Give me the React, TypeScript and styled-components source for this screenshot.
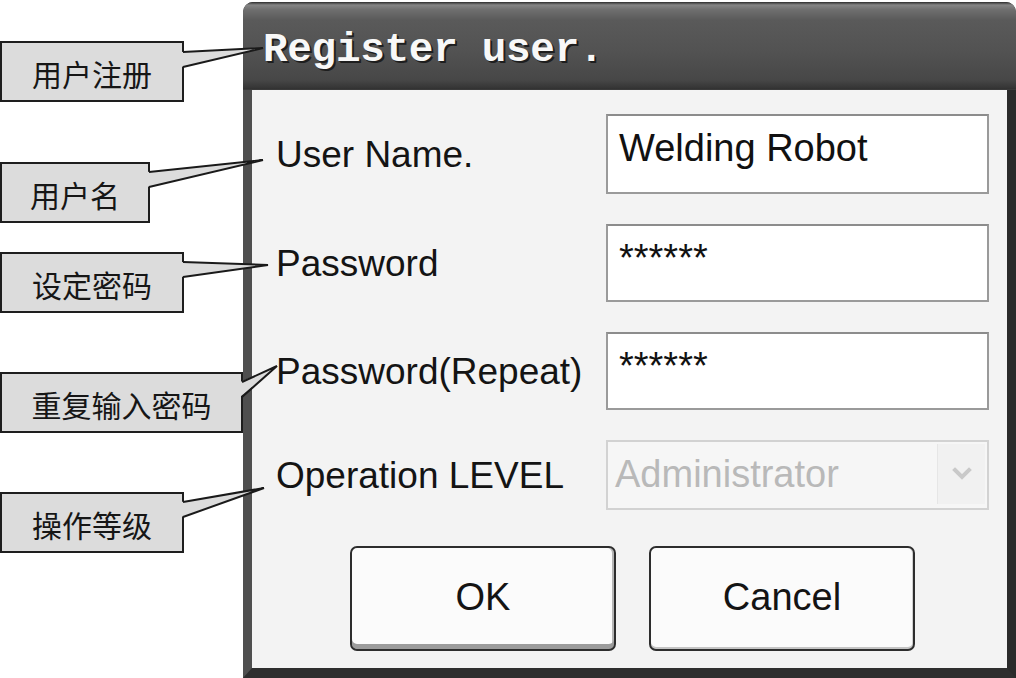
import React from "react";
import styled, { createGlobalStyle } from "styled-components";

const GlobalStyle = createGlobalStyle`
  html, body { margin: 0; padding: 0; background: #ffffff; }
  * { box-sizing: border-box; }
`;

const Page = styled.div`
  position: relative;
  width: 1016px;
  height: 678px;
  overflow: hidden;
  background: #ffffff;
  padding-top: 2px;
`;

const Dialog = styled.div`
  margin-left: 243px;
  width: 773px;
  height: 676px;
  display: flex;
  flex-direction: column;
  background: #3a3a3a;
  border-radius: 10px 10px 0 0;
  overflow: hidden;
`;

const TitleBar = styled.div`
  height: 88px;
  flex: none;
  display: flex;
  align-items: center;
  padding: 10px 0 0 20px;
  background: linear-gradient(
    #2c2c2c 0px,
    #858585 3px,
    #6e6e6e 8px,
    #5a5a5a 18px,
    #525252 50px,
    #474747 78px,
    #353535 86px,
    #2a2a2a 88px
  );
  border-bottom: 1px solid #3a3a3a;
`;

const Title = styled.h1`
  margin: 0;
  font-family: "Liberation Mono", "DejaVu Sans Mono", monospace;
  font-weight: 700;
  font-size: 41px;
  line-height: 1;
  letter-spacing: -0.3px;
  color: #f8f8f8;
  text-shadow: 2px 2px 0 #1e1e1e, 1px 1px 0 #2a2a2a;
`;

const Frame = styled.div`
  flex: 1;
  display: flex;
  border-left: 9px solid #4f4f4f;
  border-right: 9px solid #2a2a2a;
  border-bottom: 10px solid #2e2e2e;
`;

const Body = styled.div`
  flex: 1;
  background: #f3f3f3;
  padding: 24px 18px 16px 24px;
  display: flex;
  flex-direction: column;
`;

const Form = styled.div`
  display: grid;
  grid-template-columns: 330px 383px;
  grid-template-rows: 80px 78px 78px 70px;
  row-gap: 30px;
`;

const Label = styled.div`
  align-self: center;
  font-family: "Liberation Sans", Arial, sans-serif;
  font-size: 37px;
  line-height: 1;
  color: #141414;
  white-space: nowrap;
`;

const Field = styled.div<{ $disabled?: boolean }>`
  position: relative;
  display: flex;
  align-items: flex-start;
  padding: 13px 11px 0;
  background: ${(p) => (p.$disabled ? "#f6f6f6" : "#ffffff")};
  border: 2px solid ${(p) => (p.$disabled ? "#d2d2d2" : "#9a9a9a")};
  border-top-color: ${(p) => (p.$disabled ? "#d2d2d2" : "#8c8c8c")};
  font-family: "Liberation Sans", Arial, sans-serif;
  font-size: 38px;
  line-height: 38px;
  color: ${(p) => (p.$disabled ? "#b9b9b9" : "#111111")};
  white-space: nowrap;
`;

const SelectText = styled.span`
  flex: 1;
  padding-left: 0;
  margin-left: -4px;
`;

const DropButton = styled.div`
  align-self: stretch;
  width: 48px;
  margin: -11px -9px 4px 0;
  display: flex;
  align-items: center;
  justify-content: center;
  background: #f1f1f1;
  border-left: 1px solid #e6e6e6;
`;

const ButtonRow = styled.div`
  margin-top: 36px;
  display: flex;
  justify-content: center;
  gap: 33px;
`;

const Button = styled.button<{ $primary?: boolean }>`
  width: 266px;
  height: 105px;
  border: 2px solid #2d2d2d;
  border-radius: 7px;
  background: #fbfbfb;
  box-shadow: ${(p) =>
    p.$primary
      ? "inset 0 -5px 0 #9c9c9c, inset -2px 0 0 #b5b5b5"
      : "inset 0 -2px 0 #c4c4c4, inset -1px 0 0 #cfcfcf"};
  font-family: "Liberation Sans", Arial, sans-serif;
  font-size: 38px;
  color: #141414;
  padding: 0 0 2px;
  cursor: pointer;
`;

const CalloutBox = styled.div`
  position: absolute;
  left: 0;
  height: 61px;
  border: 2px solid #1e1e1e;
  background: #dcdcdc;
  display: flex;
  align-items: center;
  justify-content: center;
  font-family: "Noto Sans CJK SC", "Noto Sans", sans-serif;
  font-size: 30px;
  line-height: 1;
  color: #161616;
  padding-top: 3px;
  z-index: 2;
`;

const PointerLayer = styled.svg`
  position: absolute;
  left: 0;
  top: 0;
  width: 1016px;
  height: 678px;
  pointer-events: none;
  z-index: 3;
`;

type Callout = {
  text: string;
  top: number;
  width: number;
  y1: number;
  y2: number;
  tx: number;
  ty: number;
};

const callouts: Callout[] = [
  { text: "用户注册", top: 41, width: 184, y1: 52, y2: 67, tx: 263, ty: 48 },
  { text: "用户名", top: 162, width: 150, y1: 172, y2: 187, tx: 263, ty: 160 },
  { text: "设定密码", top: 252, width: 184, y1: 262, y2: 277, tx: 268, ty: 265 },
  { text: "重复输入密码", top: 372, width: 243, y1: 382, y2: 397, tx: 277, ty: 366 },
  { text: "操作等级", top: 492, width: 184, y1: 502, y2: 517, tx: 264, ty: 488 },
];

const Chevron = () => (
  <svg width="20" height="14" viewBox="0 0 20 14">
    <polyline
      points="3,3 10,10 17,3"
      fill="none"
      stroke="#c9c9c9"
      strokeWidth="4"
      strokeLinecap="square"
    />
  </svg>
);

export default function App() {
  return (
    <>
      <GlobalStyle />
      <Page>
        <Dialog>
          <TitleBar>
            <Title>Register user.</Title>
          </TitleBar>
          <Frame>
            <Body>
              <Form>
                <Label>User Name.</Label>
                <Field>Welding Robot</Field>
                <Label>Password</Label>
                <Field>******</Field>
                <Label>Password(Repeat)</Label>
                <Field>******</Field>
                <Label>Operation LEVEL</Label>
                <Field $disabled>
                  <SelectText>Administrator</SelectText>
                  <DropButton>
                    <Chevron />
                  </DropButton>
                </Field>
              </Form>
              <ButtonRow>
                <Button $primary>OK</Button>
                <Button>Cancel</Button>
              </ButtonRow>
            </Body>
          </Frame>
        </Dialog>

        {callouts.map((c) => (
          <CalloutBox key={c.text} style={{ top: c.top, width: c.width }}>
            {c.text}
          </CalloutBox>
        ))}

        <PointerLayer viewBox="0 0 1016 678">
          {callouts.map((c) => (
            <g key={c.text}>
              <polygon
                points={`${c.width - 3},${c.y1} ${c.tx},${c.ty} ${c.width - 3},${c.y2}`}
                fill="#dcdcdc"
              />
              <polyline
                points={`${c.width - 1},${c.y1} ${c.tx},${c.ty} ${c.width - 1},${c.y2}`}
                fill="none"
                stroke="#1a1a1a"
                strokeWidth="2"
                strokeLinejoin="miter"
              />
            </g>
          ))}
        </PointerLayer>
      </Page>
    </>
  );
}
